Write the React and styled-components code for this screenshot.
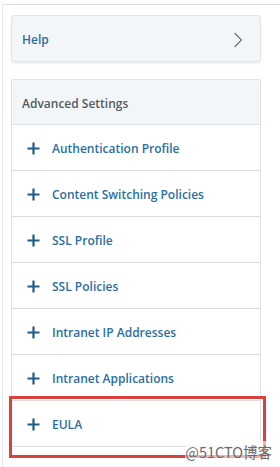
import React from 'react';
import styled, { createGlobalStyle } from 'styled-components';

const GlobalStyle = createGlobalStyle`
  html, body {
    margin: 0;
    padding: 0;
    background: #ffffff;
    width: 280px;
    height: 467px;
    overflow: hidden;
  }
  body {
    font-family: "Open Sans", "Noto Sans", sans-serif;
  }
`;

const Panel = styled.div`
  margin: 4px 0 0 2px;
  border-top: 1px solid #dcdfe3;
  border-left: 1px solid #e4e6e9;
  height: 463px;
  padding: 10px 0 0 8px;
  box-sizing: border-box;
  position: relative;
`;

const HelpCard = styled.div`
  width: 250px;
  height: 47px;
  box-sizing: border-box;
  background: #f3f6f9;
  border: 1px solid #e1e5ea;
  border-radius: 3px;
  box-shadow: 0 2px 2px rgba(0, 0, 0, 0.06);
  display: flex;
  align-items: center;
  justify-content: space-between;
  padding: 2px 17px 0 10px;
`;

const HelpLabel = styled.span`
  font-size: 12px;
  font-weight: 600;
  color: #2a6f9f;
`;

const SettingsCard = styled.div`
  margin-top: 17px;
  width: 250px;
  border: 1px solid #dfe2e6;
  border-bottom: none;
  border-radius: 3px 3px 0 0;
  box-sizing: border-box;
  background: #ffffff;
`;

const CardHeader = styled.div`
  height: 45px;
  background: #f3f6f9;
  border-bottom: 1px solid #dde1e5;
  display: flex;
  align-items: center;
  padding: 2px 0 0 10px;
  box-sizing: border-box;
  font-size: 12px;
  font-weight: 600;
  color: #555a60;
`;

const Row = styled.div`
  height: 46px;
  box-sizing: border-box;
  border-bottom: 1px solid #dcdfe2;
  display: flex;
  align-items: center;
  padding: 2px 0 0 15px;
  gap: 12px;
  position: relative;
  ${(p) => p.$highlight && `
    &::after {
      content: '';
      position: absolute;
      left: -3px;
      top: -5px;
      width: 251px;
      height: 56px;
      border: 3px solid #d9413b;
      pointer-events: none;
    }
  `}
`;

const RowLabel = styled.span`
  font-size: 12px;
  font-weight: 600;
  color: #2a6f9f;
`;

const Watermark = styled.span`
  position: absolute;
  right: 8px;
  bottom: 5px;
  font-family: "Noto Sans CJK SC", "Noto Sans", sans-serif;
  font-size: 14.5px;
  color: #6b6b6b;
  background: rgba(255, 255, 255, 0.6);
`;

const Plus = () => (
  <svg width="13" height="13" viewBox="0 0 13 13">
    <path d="M6.5 0.5V12.5M0.5 6.5H12.5" stroke="#1e5d88" strokeWidth="2.2" />
  </svg>
);

const Chevron = () => (
  <svg width="10" height="16" viewBox="0 0 10 16">
    <path d="M1.5 1L8.5 8L1.5 15" stroke="#6a6e73" strokeWidth="1.1" fill="none" />
  </svg>
);

const items = [
  'Authentication Profile',
  'Content Switching Policies',
  'SSL Profile',
  'SSL Policies',
  'Intranet IP Addresses',
  'Intranet Applications',
  'EULA',
];

export default function App() {
  return (
    <>
      <GlobalStyle />
      <Panel>
        <HelpCard>
          <HelpLabel>Help</HelpLabel>
          <Chevron />
        </HelpCard>
        <SettingsCard>
          <CardHeader>Advanced Settings</CardHeader>
          {items.map((item) => (
            <Row key={item} $highlight={item === 'EULA'}>
              <Plus />
              <RowLabel>{item}</RowLabel>
            </Row>
          ))}
        </SettingsCard>
        <Watermark>@51CTO博客</Watermark>
      </Panel>
    </>
  );
}
